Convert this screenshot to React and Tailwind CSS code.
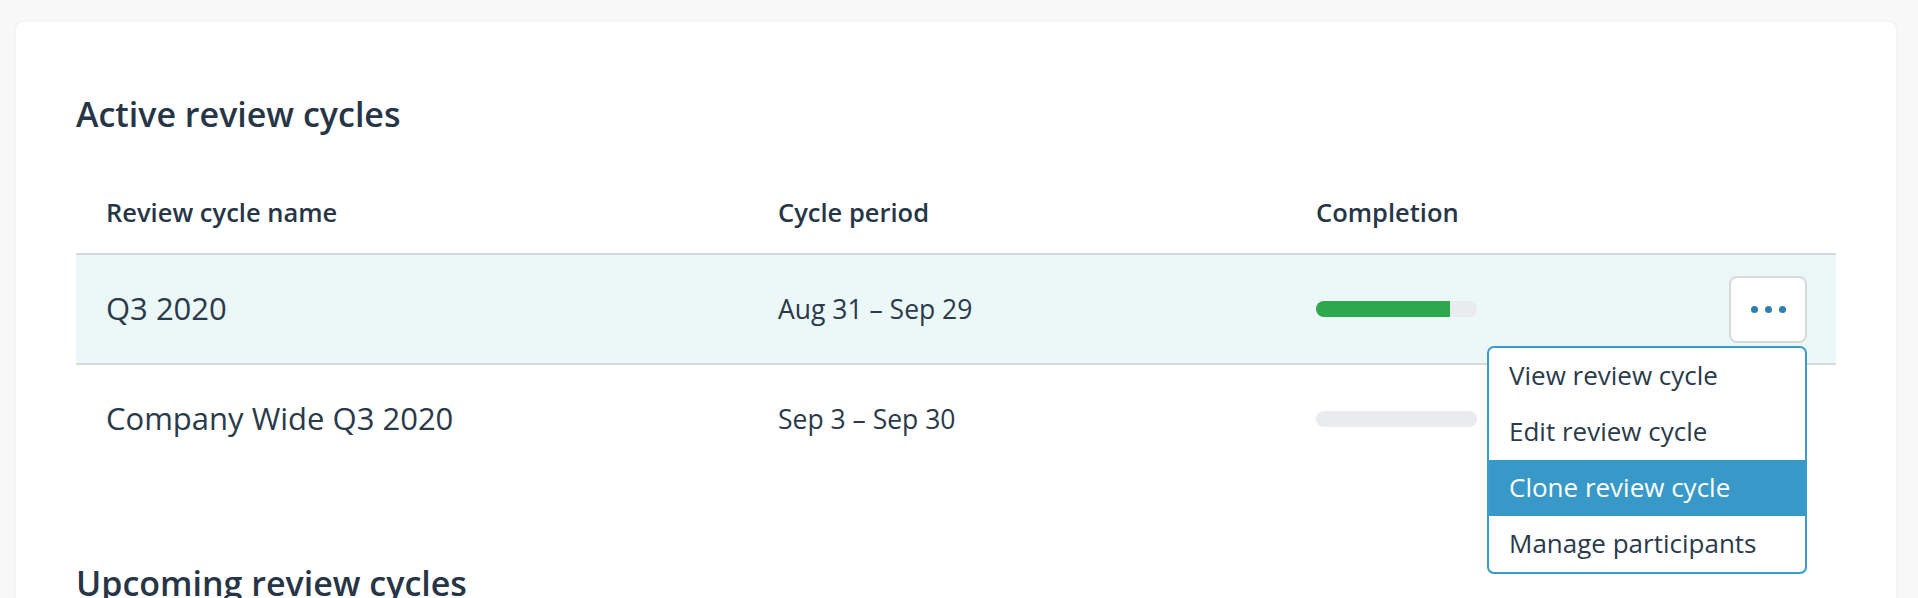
import React from "react";

const rows = [
  { name: "Q3 2020", period: "Aug 31 – Sep 29", pct: 83, active: true },
  { name: "Company Wide Q3 2020", period: "Sep 3 – Sep 30", pct: 0, active: false },
];

const menu = ["View review cycle", "Edit review cycle", "Clone review cycle", "Manage participants"];

export default function App() {
  return (
    <div className="min-h-[598px] bg-[#f8f8f8] pt-[22px] pl-[16px] font-['Open_Sans',sans-serif] text-[#2a3a4a]">
      <div className="w-[1880px] rounded-[8px] bg-white shadow-[0_0_3px_rgba(0,0,0,0.06)] px-[60px] pt-[71px] pb-[80px]">
        <h2 className="text-[34px] leading-[42px] font-semibold text-[#263646]">Active review cycles</h2>

        <div className="mt-[40px]">
          <div className="grid grid-cols-[672px_538px_1fr] h-[80px] pb-[4px] items-center border-b-2 border-[#d6dadf] text-[25.5px] font-semibold text-[#263646]">
            <div className="pl-[30px]">Review cycle name</div>
            <div className="pl-[30px]">Cycle period</div>
            <div className="pl-[30px]">Completion</div>
          </div>

          {rows.map((r, i) => (
            <div
              key={i}
              className={
                r.active
                  ? "grid grid-cols-[672px_538px_1fr] h-[110px] items-center border-b-2 border-[#d6dadf] bg-[#ecf8f8]"
                  : "grid grid-cols-[672px_538px_1fr] h-[108px] items-center"
              }
            >
              <div className="pl-[30px] pb-[2px] text-[31px] leading-[40px]">{r.name}</div>
              <div className="pl-[30px] text-[26.5px] leading-[36px]">{r.period}</div>
              <div className="pl-[30px] pr-[29px] flex items-center justify-between">
                <div className="w-[161px] h-[16px] rounded-full bg-[#e9ebee] overflow-hidden">
                  <div className="h-full bg-[#2ea84d]" style={{ width: `${r.pct}%` }} />
                </div>
                {r.active && (
                  <div className="relative">
                    <button className="w-[78px] h-[67px] rounded-[8px] border-2 border-[#d7dadd] bg-white flex items-center justify-center gap-[7px]">
                      <span className="w-[7px] h-[7px] rounded-full bg-[#2d7fae]" />
                      <span className="w-[7px] h-[7px] rounded-full bg-[#2d7fae]" />
                      <span className="w-[7px] h-[7px] rounded-full bg-[#2d7fae]" />
                    </button>
                    <div className="absolute right-0 top-[70px] z-10 w-[320px] rounded-[7px] border-2 border-[#3a9bcc] bg-white overflow-hidden">
                      {menu.map((m, j) => (
                        <div
                          key={j}
                          className={
                            j === 2
                              ? "h-[56px] flex items-center pl-[20px] text-[26px] bg-[#3899c9] text-white"
                              : "h-[56px] flex items-center pl-[20px] text-[26px] text-[#2a3a4a]"
                          }
                        >
                          {m}
                        </div>
                      ))}
                    </div>
                  </div>
                )}
              </div>
            </div>
          ))}
        </div>

        <h2 className="mt-[89px] text-[34px] leading-[42px] font-semibold text-[#263646]">Upcoming review cycles</h2>
      </div>
    </div>
  );
}
